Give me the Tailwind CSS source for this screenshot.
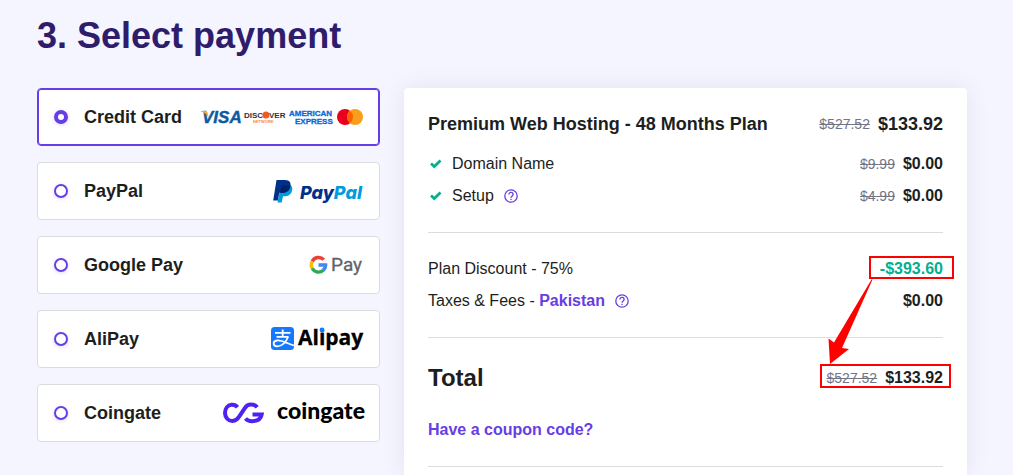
<!DOCTYPE html>
<html lang="en">
<head>
<meta charset="utf-8">
<meta name="viewport" content="width=device-width, initial-scale=1">
<title>Select payment</title>
<script src="https://cdn.jsdelivr.net/npm/@tailwindcss/browser@4"></script>
</head>
<body class="bg-[#f4f5ff] font-['Liberation_Sans',Arial,sans-serif] text-[#1d1e20]">
<main class="flex min-h-screen flex-col pt-3 pr-[46px] pl-[37px]">
  <h1 class="mb-7 text-4xl leading-[48px] font-bold text-[#2f1c6a]">3. Select payment</h1>
  <div class="grid flex-1 grid-cols-[343fr_563fr] gap-6">
    <fieldset class="flex min-w-0 flex-col gap-4" aria-label="Payment method">
      <label class="flex h-[58px] items-center gap-4 rounded border border-[#dadce0] bg-white px-4 ring-inset has-checked:border-[#673de6] has-checked:ring-1 has-checked:ring-[#673de6]">
        <input type="radio" name="pay" checked class="size-3.5 shrink-0 appearance-none rounded-full border-2 border-[#673de6] bg-white shadow-[0_1px_4px_rgba(103,61,230,0.2)] checked:border-4">
        <span class="text-lg font-bold whitespace-nowrap">Credit Card</span>
        <svg class="ml-auto shrink-0 overflow-visible" width="163" height="20" viewBox="200 107 163 20" role="img" aria-label="Visa, Discover, American Express, Mastercard">
          <text x="202" y="123" font-family="Liberation Sans, sans-serif" font-size="17" font-style="italic" font-weight="700" fill="#0e5a9c" stroke="#0e5a9c" stroke-width="0.400">VISA</text>
          <path d="M200 111h5.500q1.500 0 2 1.500l1.300 5q-2.500-4.500-8.800-6.500z" fill="#f3a53c"/>
          <g font-family="Liberation Sans, sans-serif" font-weight="700">
            <text x="244" y="118" font-size="8" fill="#333">DISC</text>
            <text x="269" y="118" font-size="8" fill="#333">VER</text>
            <circle cx="266" cy="115" r="3.500" fill="#f4591f"/>
            <text x="253" y="123" font-size="4" fill="#f58a4b">NETWORK</text>
            <g fill="#0c68d3" stroke="#0c68d3" stroke-width="0.300">
              <text x="289" y="116" font-size="8">AMERICAN</text>
              <text x="295" y="124" font-size="8">EXPRESS</text>
            </g>
          </g>
          <circle cx="345" cy="117" r="8" fill="#eb001b"/>
          <circle cx="355" cy="117" r="8" fill="#f79e1b"/>
          <path d="M350 110.750a8 8 0 0 1 0 12.500a8 8 0 0 1 0-12.500z" fill="#ff5f00"/>
        </svg>
      </label>

      <label class="flex h-[58px] items-center gap-4 rounded border border-[#dadce0] bg-white px-4 ring-inset has-checked:border-[#673de6] has-checked:ring-1 has-checked:ring-[#673de6]">
        <input type="radio" name="pay" class="size-3.5 shrink-0 appearance-none rounded-full border-2 border-[#673de6] bg-white shadow-[0_1px_4px_rgba(103,61,230,0.2)] checked:border-4">
        <span class="text-lg font-bold whitespace-nowrap">PayPal</span>
        <svg class="ml-auto shrink-0 overflow-visible" width="90" height="24" viewBox="273 179 90 24" role="img" aria-label="PayPal">
          <path d="M281 185h9.500c2 1.500 2.300 4 1.300 6.500-1.200 3.500-4 4.800-7.500 4.800h-1.300l-1.300 6.200h-4.200z" fill="#009cde"/>
          <path d="M276.500 180h8.500c4.500 0 6.300 2.800 5.400 6.500-1 4.500-4.200 6.300-8.400 6.300h-2.700l-1.500 7.700h-4.600z" fill="#003087"/>
          <path d="M281.500 185.500h4.500c2 0 3.400.200 4.400 1-1 4.500-4.200 6.300-8.400 6.300h-1.900z" fill="#012169"/>
          <text x="300" y="199" font-family="Inter, sans-serif" font-size="18" font-weight="800" font-style="italic" fill="#003087">Pay<tspan fill="#009cde">Pal</tspan></text>
        </svg>
      </label>

      <label class="flex h-[58px] items-center gap-4 rounded border border-[#dadce0] bg-white px-4 ring-inset has-checked:border-[#673de6] has-checked:ring-1 has-checked:ring-[#673de6]">
        <input type="radio" name="pay" class="size-3.5 shrink-0 appearance-none rounded-full border-2 border-[#673de6] bg-white shadow-[0_1px_4px_rgba(103,61,230,0.2)] checked:border-4">
        <span class="text-lg font-bold whitespace-nowrap">Google Pay</span>
        <svg class="ml-auto shrink-0 overflow-visible" width="54" height="24" viewBox="309 253 54 24" role="img" aria-label="Google Pay">
          <g fill="none" stroke-width="3.400">
            <path d="M323.800 259.700A7.100 7.100 0 0 0 312.200 261.500" stroke="#ea4335"/>
            <path d="M312.200 261.500A7.100 7.100 0 0 0 312.200 268.300" stroke="#fbbc04"/>
            <path d="M312.200 268.300A7.100 7.100 0 0 0 323.300 270.200" stroke="#34a853"/>
            <path d="M323 270.400A7.100 7.100 0 0 0 325.600 265H318.500" stroke="#4285f4"/>
          </g>
          <text x="331" y="271" font-family="Roboto, sans-serif" font-size="19" fill="#5f6368" stroke="#5f6368" stroke-width="0.300">Pay</text>
        </svg>
      </label>

      <label class="flex h-[58px] items-center gap-4 rounded border border-[#dadce0] bg-white px-4 ring-inset has-checked:border-[#673de6] has-checked:ring-1 has-checked:ring-[#673de6]">
        <input type="radio" name="pay" class="size-3.5 shrink-0 appearance-none rounded-full border-2 border-[#673de6] bg-white shadow-[0_1px_4px_rgba(103,61,230,0.2)] checked:border-4">
        <span class="text-lg font-bold whitespace-nowrap">AliPay</span>
        <svg class="ml-auto shrink-0 overflow-visible" width="92" height="26" viewBox="271 326 92 26" role="img" aria-label="Alipay">
          <rect x="271" y="327" width="23" height="23" rx="3.500" fill="#1677ff"/>
          <g fill="none" stroke="#fff" stroke-width="1.800">
            <path d="M275 332.800H290.500M282.700 329.500V337M276.500 336.800H288.500"/>
            <path d="M288 336.800C286.500 342 281.500 346.500 277 346.300C272.500 346 272.500 341 277 340.500C282 340 287 343.500 294 345.500"/>
          </g>
          <text x="298" y="345" font-family="Open Sans, sans-serif" font-size="21" font-weight="700" fill="#000" stroke="#000" stroke-width="0.300">Alipay</text>
          <circle cx="322" cy="330" r="2.400" fill="#1677ff"/>
        </svg>
      </label>

      <label class="flex h-[58px] items-center gap-4 rounded border border-[#dadce0] bg-white px-4 ring-inset has-checked:border-[#673de6] has-checked:ring-1 has-checked:ring-[#673de6]">
        <input type="radio" name="pay" class="size-3.5 shrink-0 appearance-none rounded-full border-2 border-[#673de6] bg-white shadow-[0_1px_4px_rgba(103,61,230,0.2)] checked:border-4">
        <span class="text-lg font-bold whitespace-nowrap">Coingate</span>
        <svg class="ml-auto shrink-0 overflow-visible" width="140" height="26" viewBox="223 401 140 26" role="img" aria-label="Coingate">
          <g fill="none" stroke="#4f22f2" stroke-width="4">
            <path d="M237.500 408.200C236 406.300 233.800 405.600 231.500 405.800C227.500 406.300 225 409.700 225 414C225 418.500 228.300 422.200 232.500 422C235.500 421.900 237.500 420.300 239 417.800L245 408.800C246.800 406.200 249 405.300 251.500 405.500C254 405.600 255.800 406.600 257.200 408.300"/>
            <path d="M245.500 419.500C247 421.300 249 422.200 252 422.200C257.500 422.200 261 419.500 261.700 415.500H252.500"/>
          </g>
          <text x="277" y="420" font-family="Lato, sans-serif" font-size="23" font-weight="900" fill="#000">coingate</text>
        </svg>
      </label>
    </fieldset>

    <section aria-label="Order summary" class="relative min-w-0 rounded-t bg-white px-6 pt-6 shadow-[0_0_24px_rgba(47,28,106,0.08)]">
      <div class="flex items-center justify-between">
        <h2 class="text-lg leading-6 font-bold">Premium Web Hosting - 48 Months Plan</h2>
        <p class="flex items-center gap-2 leading-6"><s class="text-sm text-[#727586]">$527.52</s><b class="text-lg leading-6">$133.92</b></p>
      </div>
      <div class="mt-4 flex items-center justify-between leading-6">
        <p class="flex items-center gap-2.5">
          <svg class="ml-0.5" width="12" height="12" viewBox="0 0 12 12" fill="none" stroke="#00b090" stroke-width="2.800" aria-hidden="true"><path d="M1 5.500L4.300 8.600L10.500 2.600"/></svg>
          Domain Name
        </p>
        <p class="flex items-center gap-2"><s class="text-sm text-[#727586]">$9.99</s><b>$0.00</b></p>
      </div>
      <div class="mt-2 flex items-center justify-between leading-6">
        <p class="flex items-center gap-2.5">
          <svg class="ml-0.5" width="12" height="12" viewBox="0 0 12 12" fill="none" stroke="#00b090" stroke-width="2.800" aria-hidden="true"><path d="M1 5.500L4.300 8.600L10.500 2.600"/></svg>
          Setup
          <button type="button" aria-label="About setup"><svg class="block" width="14" height="14" viewBox="0 0 14 14" fill="none" stroke="#673de6" stroke-width="1.300"><circle cx="7" cy="7" r="6.200"/><path d="M4.900 5.500C4.900 2.700 9.100 2.800 9.100 5.400C9.100 6.900 7 7 7 8.800M7 9.700V11"/></svg></button>
        </p>
        <p class="flex items-center gap-2"><s class="text-sm text-[#727586]">$4.99</s><b>$0.00</b></p>
      </div>
      <hr class="mt-6 border-[#dadce0]">
      <div class="mt-6 flex items-center justify-between leading-6">
        <p>Plan Discount - 75%</p>
        <b class="text-[#00b090]">-$393.60</b>
      </div>
      <div class="mt-2 flex items-center justify-between leading-6">
        <p class="flex items-center gap-2.5">
          <span>Taxes &amp; Fees - <a href="#" class="font-bold text-[#673de6]">Pakistan</a></span>
          <button type="button" aria-label="About taxes and fees"><svg class="block" width="14" height="14" viewBox="0 0 14 14" fill="none" stroke="#673de6" stroke-width="1.300"><circle cx="7" cy="7" r="6.200"/><path d="M4.900 5.500C4.900 2.700 9.100 2.800 9.100 5.400C9.100 6.900 7 7 7 8.800M7 9.700V11"/></svg></button>
        </p>
        <b>$0.00</b>
      </div>
      <hr class="mt-6 border-[#dadce0]">
      <div class="mt-6 flex items-center justify-between leading-8">
        <h3 class="text-2xl leading-8 font-bold">Total</h3>
        <p class="flex items-center gap-2"><s class="text-sm text-[#727586]">$527.52</s><b>$133.92</b></p>
      </div>
      <a href="#" class="mt-6 block leading-6 font-bold text-[#673de6]">Have a coupon code?</a>
      <hr class="mt-6 border-[#dadce0]">

      <!-- Red callouts over the discount and the total -->
      <svg class="pointer-events-none absolute top-[162px] right-2" width="144" height="144" viewBox="815 250 144 144" aria-hidden="true">
        <g fill="none" stroke="#f00" stroke-width="2">
          <rect x="870" y="257" width="83" height="21"/>
          <rect x="821" y="365" width="129" height="22"/>
        </g>
        <path d="M872.500 279.500L842 348L849 349L830 364L828.500 338.500L834 342.500L871.500 279.500z" fill="#f00"/>
      </svg>
    </section>
  </div>
</main>
</body>
</html>
